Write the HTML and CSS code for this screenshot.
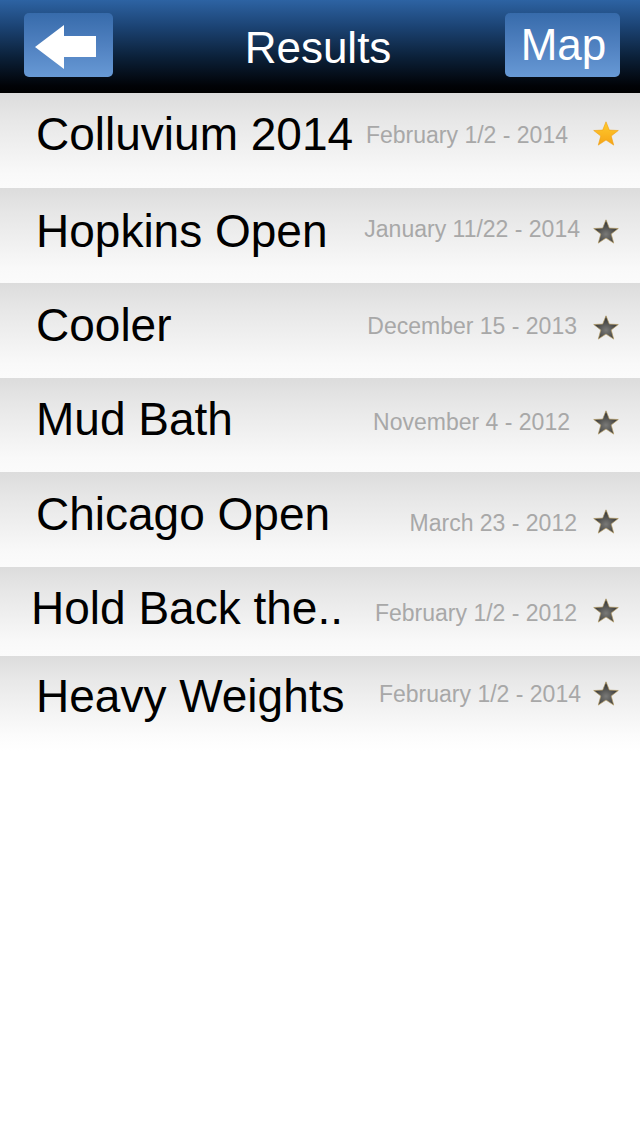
FILE: index.html
```html
<!DOCTYPE html>
<html>
<head>
<meta charset="utf-8">
<title>Results</title>
<link rel="stylesheet" href="styles.css">
</head>
<body>
<div class="app">
  <header class="navbar">
    <button class="nav-btn nav-btn--back" aria-label="Back">
      <svg width="89" height="64" viewBox="0 0 89 64"><polygon points="11,34 40,12 40,23 72,23 72,44 40,44 40,56" fill="#fff"/></svg>
    </button>
    <h1 class="nav-title">Results</h1>
    <button class="nav-btn nav-btn--map">Map</button>
  </header>

  <svg width="0" height="0" class="defs">
    <defs>
      <linearGradient id="gold" x1="0" y1="0" x2="0" y2="1">
        <stop offset="0" stop-color="#ffcc2e"/>
        <stop offset="1" stop-color="#f6a416"/>
      </linearGradient>
      <radialGradient id="grey" cx="0.5" cy="0.62" r="0.6">
        <stop offset="0" stop-color="#7a7a78"/>
        <stop offset="0.6" stop-color="#4c4c4a"/>
        <stop offset="1" stop-color="#2c2c2b"/>
      </radialGradient>
      <polygon id="starshape" points="13,0.8 16.3,9.1 25.3,9.5 18.2,15 20.7,24.1 13,19 5.3,24.1 7.8,15 0.7,9.5 9.7,9.1"/>
    </defs>
  </svg>

  <ul class="list">
    <li class="row row-1">
      <span class="row-title">Colluvium 2014</span>
      <span class="row-date">February 1/2 - 2014</span>
      <svg class="star" viewBox="0 0 26 25"><use href="#starshape" fill="url(#gold)" stroke="#f0a010" stroke-width="0.6"/></svg>
    </li>
    <li class="row row-2">
      <span class="row-title">Hopkins Open</span>
      <span class="row-date">January 11/22 - 2014</span>
      <svg class="star" viewBox="0 0 26 25"><use href="#starshape" fill="url(#grey)" stroke="#b49c66" stroke-width="0.7"/></svg>
    </li>
    <li class="row row-3">
      <span class="row-title">Cooler</span>
      <span class="row-date">December 15 - 2013</span>
      <svg class="star" viewBox="0 0 26 25"><use href="#starshape" fill="url(#grey)" stroke="#b49c66" stroke-width="0.7"/></svg>
    </li>
    <li class="row row-4">
      <span class="row-title">Mud Bath</span>
      <span class="row-date">November 4 - 2012</span>
      <svg class="star" viewBox="0 0 26 25"><use href="#starshape" fill="url(#grey)" stroke="#b49c66" stroke-width="0.7"/></svg>
    </li>
    <li class="row row-5">
      <span class="row-title">Chicago Open</span>
      <span class="row-date">March 23 - 2012</span>
      <svg class="star" viewBox="0 0 26 25"><use href="#starshape" fill="url(#grey)" stroke="#b49c66" stroke-width="0.7"/></svg>
    </li>
    <li class="row row-6">
      <span class="row-title">Hold Back the..</span>
      <span class="row-date">February 1/2 - 2012</span>
      <svg class="star" viewBox="0 0 26 25"><use href="#starshape" fill="url(#grey)" stroke="#b49c66" stroke-width="0.7"/></svg>
    </li>
    <li class="row row-7">
      <span class="row-title">Heavy Weights</span>
      <span class="row-date">February 1/2 - 2014</span>
      <svg class="star" viewBox="0 0 26 25"><use href="#starshape" fill="url(#grey)" stroke="#b49c66" stroke-width="0.7"/></svg>
    </li>
  </ul>
</div>
</body>
</html>
```

FILE: styles.css
```css
* {
  box-sizing: border-box;
}

html, body {
  margin: 0;
  padding: 0;
  background: #ffffff;
}

body {
  font-family: "Liberation Sans", Arial, Helvetica, sans-serif;
  width: 640px;
  height: 1136px;
  overflow: hidden;
}

.defs {
  position: absolute;
  width: 0;
  height: 0;
}

.navbar {
  height: 93px;
  padding: 13px 20px 0 24px;
  display: grid;
  grid-template-columns: 1fr auto 1fr;
  align-items: start;
  background: linear-gradient(to bottom, #2d63a3 0%, #1c4475 28%, #0b2038 62%, #010307 92%, #000 100%);
}

.nav-btn {
  height: 64px;
  border: none;
  border-radius: 5px;
  padding: 0;
  margin: 0;
  background: linear-gradient(to bottom, #376bab 0%, #5283c2 55%, #6799d5 100%);
  color: #fff;
  font-family: "Liberation Sans", Arial, Helvetica, sans-serif;
  display: flex;
  align-items: center;
  justify-content: center;
}

.nav-btn--back {
  width: 89px;
  justify-self: start;
}

.nav-btn--back svg {
  display: block;
}

.nav-btn--map {
  width: 115px;
  justify-self: end;
  font-size: 44px;
  line-height: 64px;
  padding-top: 0;
  padding-left: 2px;
}

.nav-title {
  margin: 13px 8px 0 0;
  font-weight: normal;
  font-size: 44px;
  line-height: 1;
  color: #fff;
}

.list {
  list-style: none;
  margin: 0;
  padding: 0;
}

.row {
  --h: 95px;
  --title-top: 19px;
  --date-top: 30px;
  --date-gap: 16px;
  --star-top: 32px;
  --pad-left: 36px;
  height: var(--h);
  display: flex;
  align-items: flex-start;
  padding: 0 21px 0 var(--pad-left);
  background: linear-gradient(to bottom, #dcdcdc 0%, #e6e6e6 25%, #f1f1f1 60%, #f9f9f9 85%, #fbfbfb 100%);
}

.row-title {
  flex: 1;
  white-space: nowrap;
  font-size: 46px;
  line-height: 1;
  color: #000;
  margin-top: var(--title-top);
}

.row-date {
  white-space: nowrap;
  font-size: 23px;
  line-height: 1;
  color: #a8a8a8;
  margin-top: var(--date-top);
}

.star {
  width: 26px;
  height: 25px;
  flex: none;
  margin-left: var(--date-gap);
  margin-top: var(--star-top);
}

.row-1 { --title-top: 18px; --date-top: 31px; --date-gap: 25px; --star-top: 28px; }
.row-2 { --title-top: 20px; --date-top: 30px; --date-gap: 13px; --star-top: 31px; }
.row-3 { --title-top: 19px; --date-top: 32px; --date-gap: 16px; --star-top: 32px; }
.row-4 { --h: 94px; --title-top: 18px; --date-top: 33px; --date-gap: 23px; --star-top: 32px; }
.row-5 { --title-top: 19px; --date-top: 40px; --date-gap: 16px; --star-top: 37px; }
.row-6 { --h: 89px; --pad-left: 31px; --title-top: 18px; --date-top: 35px; --date-gap: 16px; --star-top: 31px; }
.row-7 {
  --title-top: 17px; --date-top: 27px; --date-gap: 12px; --star-top: 25px;
  background: linear-gradient(to bottom, #dcdcdc 0%, #e8e8e8 25%, #f4f4f4 60%, #fcfcfc 85%, #ffffff 100%);
}
```
